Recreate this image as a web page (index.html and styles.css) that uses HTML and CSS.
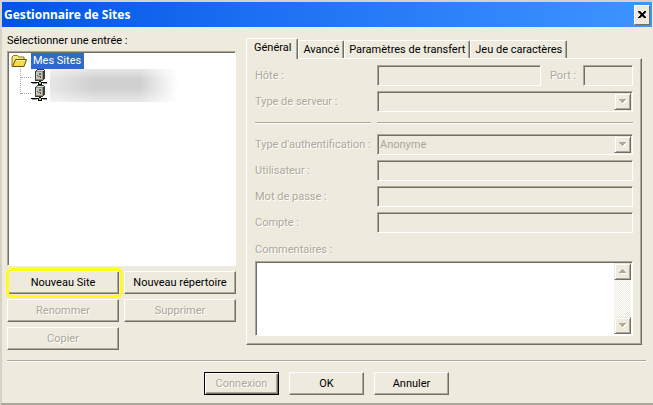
FILE: index.html
```html
<!DOCTYPE html>
<html lang="fr">
<head>
<meta charset="utf-8">
<title>Gestionnaire de Sites</title>
<link rel="stylesheet" href="styles.css">
</head>
<body>
<svg class="defs" width="0" height="0" aria-hidden="true">
  <symbol id="server" viewBox="0 0 16 16" shape-rendering="crispEdges">
    <path d="M5 1h1V0h7v1h1v9h-1v1h-1v1H4V2h1z" fill="#3c3c3c"/>
    <path d="M5 2h7v9H5z" fill="#8c8c88"/>
    <path d="M6 1h7v1H6z" fill="#d8d8d4"/>
    <path d="M5 3h6v7H5z" fill="#c4c4c0"/>
    <path d="M8 4h2v1H8zM7 7h2v1H7z" fill="#1d9a3c"/>
    <path d="M6 6h1v1H6zM9 7h1v2H9z" fill="#d22"/>
    <path d="M8 5h2v1H8z" fill="#555"/>
    <path d="M8 12h2v1h1v3H7v-3h1zM0 13h16v1H0z" fill="#000"/>
    <path d="M8 13h2v2H8z" fill="#d8cf2c"/>
    <path d="M1 14h5v1H1zM12 14h4v1h-4z" fill="#999"/>
  </symbol>
  <symbol id="down" viewBox="0 0 8 5" shape-rendering="crispEdges">
    <path d="M1 1h7v1H7v1H6v1H5v1H4V4H3V3H2V2H1z" fill="#fff"/>
    <path d="M0 0h7v1H6v1H5v1H4v1H3V3H2V2H1V1H0z" fill="#aca899"/>
  </symbol>
  <symbol id="up" viewBox="0 0 8 5" shape-rendering="crispEdges">
    <path d="M1 4h7v1H1z" fill="#fff"/>
    <path d="M3 0h1v1h1v1h1v1h1v1H0V3h1V2h1V1h1z" fill="#aca899"/>
  </symbol>
</svg>
<div class="window">
  <header class="titlebar">
    <h1>Gestionnaire de Sites</h1>
    <button class="close" type="button" aria-label="Fermer">
      <svg width="8" height="7" viewBox="0 0 8 7" shape-rendering="crispEdges"><path d="M0 0h2v1h1v1h2V1h1V0h2v1H7v1H6v1H5v1h1v1h1v1h1v1H6V6H5V5H3v1H2v1H0V6h1V5h1V4h1V3H2V2H1V1H0z" fill="#000" stroke="#000" stroke-width=".5"/></svg>
    </button>
  </header>
  <main class="content">
    <section class="sites">
      <h2 id="tree-label">Sélectionner une entrée :</h2>
      <div class="tree sunken" role="tree" aria-labelledby="tree-label">
        <div class="root" role="treeitem" aria-selected="true">
          <svg width="17" height="14" viewBox="0 0 17 14">
            <path d="M1 12.500V3L2.500 1.500h4L8 3h5v3" fill="#f6e88a" stroke="#8b7410"/>
            <path d="M1.500 12.500L4.500 5.500h11L13 12.500z" fill="#f2dc4e" stroke="#665200"/>
            <path d="M5 6.500h9" stroke="#fff6ad"/>
          </svg>
          <span class="selected">Mes Sites</span>
        </div>
        <div class="branch">
          <div class="guides"><i></i><i></i></div>
          <div class="servers">
            <svg width="16" height="16"><use href="#server"/></svg>
            <svg width="16" height="16"><use href="#server"/></svg>
          </div>
          <div class="masked"></div>
        </div>
      </div>
      <div class="actions">
        <button class="btn marked" type="button">Nouveau Site</button>
        <button class="btn" type="button">Nouveau répertoire</button>
        <button class="btn" type="button" disabled>Renommer</button>
        <button class="btn" type="button" disabled>Supprimer</button>
        <button class="btn" type="button" disabled>Copier</button>
      </div>
    </section>
    <section class="settings">
      <div class="tabs" role="tablist">
        <button class="tab active" type="button" role="tab" aria-selected="true">Général</button>
        <button class="tab" type="button" role="tab">Avancé</button>
        <button class="tab" type="button" role="tab">Paramètres de transfert</button>
        <button class="tab" type="button" role="tab">Jeu de caractères</button>
      </div>
      <form class="panel">
        <div class="fields">
          <label for="host">Hôte :</label>
          <div class="host-row">
            <input class="sunken" id="host" type="text" disabled>
            <label for="port">Port :</label>
            <input class="sunken port" id="port" type="text" disabled>
          </div>
          <label for="type">Type de serveur :</label>
          <div class="combo sunken">
            <select id="type" disabled><option></option></select>
            <span class="arrow"><svg width="8" height="5"><use href="#down"/></svg></span>
          </div>
          <div class="rule"></div>
          <div class="rule"></div>
          <label for="auth">Type d'authentification :</label>
          <div class="combo sunken">
            <select id="auth" disabled><option>Anonyme</option></select>
            <span class="arrow"><svg width="8" height="5"><use href="#down"/></svg></span>
          </div>
          <label for="user">Utilisateur :</label>
          <input class="sunken" id="user" type="text" disabled>
          <label for="pass">Mot de passe :</label>
          <input class="sunken" id="pass" type="password" disabled>
          <label for="account">Compte :</label>
          <input class="sunken" id="account" type="text" disabled>
        </div>
        <label class="comments-label" for="comments">Commentaires :</label>
        <div class="comments sunken">
          <textarea id="comments" disabled></textarea>
          <div class="scrollbar">
            <span class="arrow"><svg width="8" height="5"><use href="#up"/></svg></span>
            <span class="arrow"><svg width="8" height="5"><use href="#down"/></svg></span>
          </div>
        </div>
      </form>
    </section>
  </main>
  <footer class="footer">
    <button class="btn default" type="button" disabled>Connexion</button>
    <button class="btn" type="button">OK</button>
    <button class="btn" type="button">Annuler</button>
  </footer>
</div>
</body>
</html>
```
FILE: styles.css
```css
:root {
  --face: #eeeade;
  --shade: #aca899;
  --dark: #716f64;
  --light: #fff;
}
* { box-sizing: border-box; }
body {
  margin: 0;
  background: var(--face);
  color: #000;
  font: 11px/14px Roboto, "DejaVu Sans Condensed", sans-serif;
}
svg { display: block; flex: none; }
.defs { position: absolute; }
button, input, select, textarea { font: inherit; color: inherit; margin: 0; }
.window {
  display: flex;
  flex-direction: column;
  min-height: 100vh;
  border: 2px solid #d6d2c6;
  border-right: 0;
  border-bottom-color: var(--shade);
}
.titlebar {
  display: flex;
  align-items: center;
  justify-content: space-between;
  height: 25px;
  margin-right: 1px;
  padding: 0 2px;
  background: linear-gradient(90deg, #0054e3, #1c70f2 40%, #3d95ff);
}
h1 { margin: 0; color: #fff; font: bold 12px/20px "Noto Sans", sans-serif; }
h2 { margin: 0; font: inherit; }
.close {
  display: grid;
  place-items: center;
  width: 16px;
  height: 20px;
  padding: 0;
  background: var(--face);
  border: 1px solid;
  border-color: var(--light) var(--dark) var(--dark) var(--light);
}
.content {
  display: flex;
  flex: 1;
  gap: 10px;
  margin: 0 7px 0 5px;
  padding: 7px 4px 10px 0;
  border-bottom: 1px solid var(--shade);
  box-shadow: 0 1px var(--light);
}
.sunken {
  border: 1px solid;
  border-color: var(--shade) var(--light) var(--light) var(--shade);
  box-shadow: inset 1px 1px var(--dark);
}
.sites { display: flex; flex-direction: column; width: 229px; }
.tree {
  flex: 1;
  margin: 3px 0 5px;
  padding: 1px 3px;
  background: #fff;
}
.root { display: flex; align-items: center; gap: 3px; }
.selected { padding: 1px 3px 1px 2px; background: #316ac5; color: #fff; }
.branch { display: flex; padding-left: 9px; }
.guides { width: 11px; border-left: 1px dotted var(--shade); height: 25px; }
.guides i { display: block; height: 9px; border-bottom: 1px dotted var(--shade); }
.guides i + i { height: 16px; }
.masked {
  width: 128px;
  height: 33px;
  margin-left: 3px;
  background:
    linear-gradient(90deg, #fff0 70%, #fff),
    linear-gradient(#fff7, #fff0 30% 60%, #fff8),
    linear-gradient(90deg, #e6e6e6, #d0d0d0 35%, #d0d0d0 70%, #d8d8d8);
}
.actions { display: grid; grid-template-columns: 1fr 1fr; gap: 5px; }
.btn {
  height: 23px;
  padding: 0;
  background: var(--face);
  border: 1px solid;
  border-color: var(--light) var(--dark) var(--dark) var(--light);
  box-shadow: inset -1px -1px var(--shade);
}
.marked { position: relative; }
.marked::after {
  content: "";
  position: absolute;
  inset: -4px -5px -5px -2px;
  border: 3px solid #fffa20;
  border-radius: 6px;
}
.btn:disabled, label { color: var(--shade); text-shadow: 1px 1px var(--light); }
.settings { display: flex; flex: 1; flex-direction: column; padding: 4px 0 5px; }
.tabs { display: flex; align-items: flex-end; }
.tab {
  height: 18px;
  padding: 0 4px;
  background: var(--face);
  border: 1px solid;
  border-color: var(--light) var(--dark) transparent var(--light);
  border-bottom: 0;
  border-radius: 2px 2px 0 0;
  box-shadow: inset -1px 0 var(--shade);
}
.tab.active { z-index: 1; height: 21px; margin-bottom: -1px; padding: 0 6px 2px 7px; }
.panel {
  display: flex;
  flex: 1;
  flex-direction: column;
  padding: 6px 8px 8px;
  border: 1px solid;
  border-color: var(--light) var(--dark) var(--dark) var(--light);
  box-shadow: inset -1px -1px var(--shade);
}
.fields {
  display: grid;
  grid-template-columns: 116px 1fr;
  gap: 5px 6px;
  align-items: center;
}
.fields label { white-space: nowrap; }
input { width: 100%; min-width: 0; height: 21px; padding: 0 2px; background: var(--face); border-radius: 0; }
.host-row { display: flex; align-items: center; gap: 6px; }
.host-row label { flex: none; width: 30px; padding-left: 3px; }
.host-row .port { flex: none; width: 50px; }
.combo { display: flex; height: 21px; padding: 1px; }
.combo select {
  flex: 1;
  appearance: none;
  padding: 0 1px;
  background: none;
  border: 0;
  color: var(--shade);
  opacity: 1;
}
.arrow {
  display: grid;
  place-items: center;
  width: 17px;
  height: 17px;
  background: var(--face);
  border: 1px solid;
  border-color: var(--face) var(--dark) var(--dark) var(--face);
  box-shadow: inset 1px 1px var(--light), inset -1px -1px var(--shade);
}
.rule { height: 2px; margin: 5px 0; border-top: 1px solid var(--shade); border-bottom: 1px solid var(--light); }
.comments-label { margin: 10px 0 4px; }
.comments { display: flex; flex: 1; padding: 1px; background: #fff; }
textarea { flex: 1; min-width: 0; padding: 2px; background: #fff; border: 0; resize: none; }
.scrollbar {
  display: flex;
  flex-direction: column;
  justify-content: space-between;
  background: repeating-conic-gradient(#fff 0 25%, var(--face) 0 50%) 0 0 / 2px 2px;
}
.footer { display: flex; justify-content: center; gap: 10px; padding: 11px 2px 8px 0; }
.footer .btn { width: 75px; }
.default { border-color: #000; box-shadow: inset 1px 1px var(--light), inset -1px -1px var(--dark), inset -2px -2px var(--shade); }
```
